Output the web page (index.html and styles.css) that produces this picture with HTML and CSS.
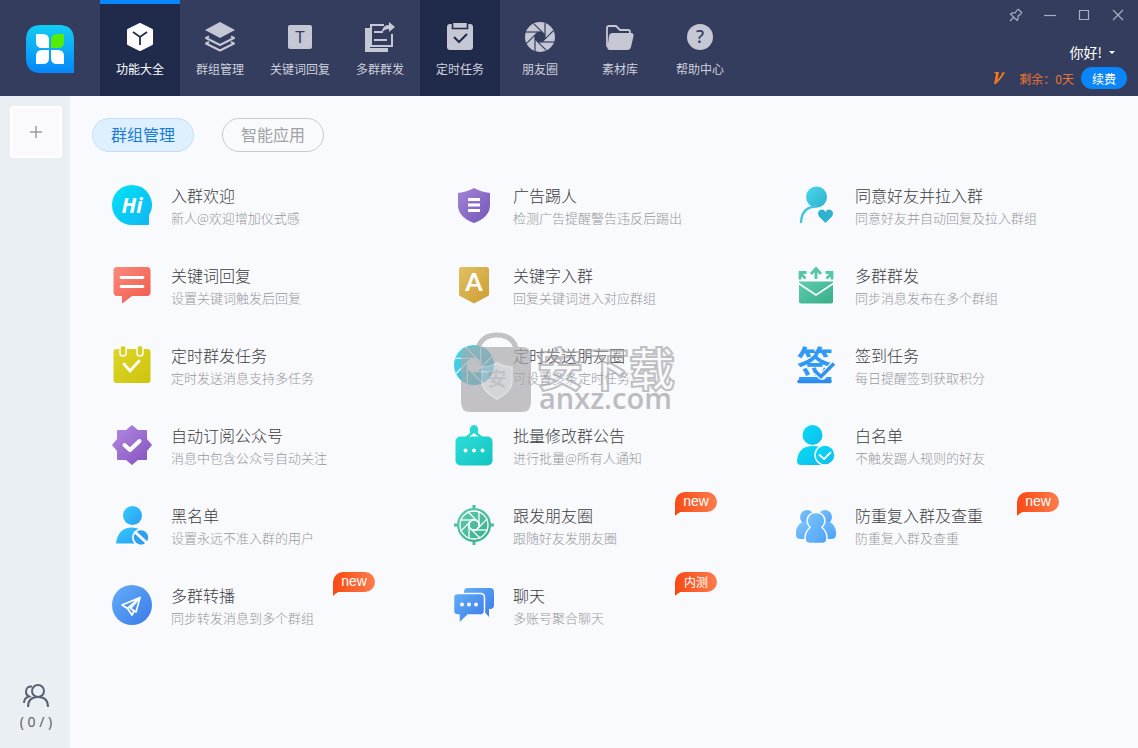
FILE: index.html
```html
<!DOCTYPE html>
<html lang="zh-CN">
<head>
<meta charset="utf-8">
<title>功能大全</title>
<link rel="stylesheet" href="styles.css">
</head>
<body>
<svg class="defs" width="0" height="0" aria-hidden="true">
  <defs>
    <linearGradient id="g-logo" x1="0" y1="0" x2="0" y2="1"><stop offset="0" stop-color="#12cdf2"/><stop offset="1" stop-color="#0686fb"/></linearGradient>
    <linearGradient id="g-hi" x1="0" y1="0" x2="1" y2="1"><stop offset="0" stop-color="#00e2f8"/><stop offset="1" stop-color="#10b6f2"/></linearGradient>
    <linearGradient id="g-red" x1="0" y1="0" x2="1" y2="1"><stop offset="0" stop-color="#fb8a7c"/><stop offset="1" stop-color="#ee5a4c"/></linearGradient>
    <linearGradient id="g-yellow" x1="0" y1="0" x2="1" y2="1"><stop offset="0" stop-color="#dcd62c"/><stop offset="1" stop-color="#cfc40c"/></linearGradient>
    <linearGradient id="g-purple" x1="0" y1="0" x2="1" y2="1"><stop offset="0" stop-color="#b48ae0"/><stop offset="1" stop-color="#8250c0"/></linearGradient>
    <linearGradient id="g-shield" x1="0" y1="0" x2="1" y2="1"><stop offset="0" stop-color="#a484d4"/><stop offset="1" stop-color="#7456b8"/></linearGradient>
    <linearGradient id="g-gold" x1="0" y1="0" x2="1" y2="1"><stop offset="0" stop-color="#e2c060"/><stop offset="1" stop-color="#cc9c34"/></linearGradient>
    <linearGradient id="g-sky" x1="0" y1="0" x2="1" y2="1"><stop offset="0" stop-color="#36ccfc"/><stop offset="1" stop-color="#2a9cf4"/></linearGradient>
    <linearGradient id="g-blue" x1="0" y1="0" x2="1" y2="1"><stop offset="0" stop-color="#62aef8"/><stop offset="1" stop-color="#3a7ae8"/></linearGradient>
    <linearGradient id="g-aqua" x1="0" y1="0" x2="1" y2="1"><stop offset="0" stop-color="#4cd8ec"/><stop offset="1" stop-color="#2ab0cc"/></linearGradient>
    <linearGradient id="g-green" x1="0" y1="0" x2="1" y2="1"><stop offset="0" stop-color="#5eccae"/><stop offset="1" stop-color="#38ae8a"/></linearGradient>
    <linearGradient id="g-teal" x1="0" y1="0" x2="1" y2="1"><stop offset="0" stop-color="#2cdcd8"/><stop offset="1" stop-color="#12c4c0"/></linearGradient>
    <linearGradient id="g-cyan" x1="0" y1="0" x2="1" y2="1"><stop offset="0" stop-color="#0adcf4"/><stop offset="1" stop-color="#0cbcec"/></linearGradient>
    <linearGradient id="g-group" x1="0" y1="0" x2="1" y2="1"><stop offset="0" stop-color="#7cc4fc"/><stop offset="1" stop-color="#4ea2f8"/></linearGradient>
    <path id="octagon" d="M-2-5H2L5-2V2L2 5H-2L-5 2V-2z"/>
    <path id="ray" d="M-14-5H2"/>
    <g id="rays">
      <use href="#ray"/><use href="#ray" transform="rotate(45)"/><use href="#ray" transform="rotate(90)"/><use href="#ray" transform="rotate(135)"/>
      <use href="#ray" transform="rotate(180)"/><use href="#ray" transform="rotate(225)"/><use href="#ray" transform="rotate(270)"/><use href="#ray" transform="rotate(315)"/>
    </g>
  </defs>
</svg>

<header class="topbar">
  <div class="brand">
    <svg width="48" height="48" viewBox="0 0 48 48" aria-hidden="true">
      <path fill="url(#g-logo)" d="M15 0H33Q48 0 48 15V48H15Q0 48 0 33V15Q0 0 15 0z"/>
      <path fill="#fff" d="M10 9h7q6 0 6 6v8h-7q-6 0-6-6zM10 39V31q0-6 6-6h7v8q0 6-6 6zM38 39h-7q-6 0-6-6v-8h7q6 0 6 6z"/>
      <path fill="#55ec08" d="M38 9v8q0 6-6 6h-7v-8q0-6 6-6z"/>
    </svg>
  </div>
  <nav class="nav">
    <button class="nav-item current">
      <svg width="30" height="30" viewBox="0 0 30 30"><path fill="currentColor" stroke="currentColor" stroke-width="2" stroke-linejoin="round" d="M15 2l12 6v14l-12 6-12-6V8z"/><path fill="none" stroke="#202b4c" stroke-width="1.8" d="M8 10l7 5 7-5M15 15V23"/></svg>
      <span>功能大全</span>
    </button>
    <button class="nav-item">
      <svg width="30" height="30" viewBox="0 0 30 30"><path fill="currentColor" d="M15 0l15 8-15 8-15-8z"/><path fill="none" stroke="currentColor" stroke-width="2" stroke-linejoin="round" d="M4 14.500l-3 1.500 14 7 14-7-3-1.500M4 20l-3 1.500 14 7 14-7-3-1.500"/></svg>
      <span>群组管理</span>
    </button>
    <button class="nav-item">
      <svg width="30" height="30" viewBox="0 0 30 30"><rect x="3" y="3" width="24" height="24" rx="2" fill="currentColor"/><text class="glyph-t" x="15" y="21" text-anchor="middle">T</text></svg>
      <span>关键词回复</span>
    </button>
    <button class="nav-item">
      <svg width="30" height="30" viewBox="0 0 30 30"><path fill="currentColor" d="M0 6h5v20h18v4H0z"/><path fill="none" stroke="currentColor" stroke-width="2" d="M19 3H6v21h21V12"/><path fill="none" stroke="currentColor" stroke-width="1.800" d="M9 10h9M9 18h13"/><path fill="currentColor" d="M24 0l6 5-6 5V7q-5 0-7 4 0-8 7-8z"/></svg>
      <span>多群群发</span>
    </button>
    <button class="nav-item hovered">
      <svg width="30" height="30" viewBox="0 0 30 30"><rect x="2" y="2" width="26" height="26" rx="3" fill="currentColor"/><path fill="currentColor" stroke="#202b4c" stroke-width="1.600" d="M7.500 1v5.500h15V1"/><path fill="none" stroke="#202b4c" stroke-width="2" d="M9 15l5 5 8-8"/></svg>
      <span>定时任务</span>
    </button>
    <button class="nav-item">
      <svg width="30" height="30" viewBox="-15 -15 30 30"><circle r="15" fill="currentColor"/><use href="#octagon" fill="#343d5e"/><use href="#rays" stroke="#343d5e" stroke-width="1.200"/></svg>
      <span>朋友圈</span>
    </button>
    <button class="nav-item">
      <svg width="30" height="30" viewBox="0 0 30 30"><path fill="none" stroke="currentColor" stroke-width="1.800" stroke-linejoin="round" d="M4 25Q2 25 2 23V6q0-2 2-2h7l4 4h8q2 0 2 2v2"/><path fill="currentColor" d="M8 11h18q3 0 2.500 3L26 25q-.5 3-4 3H5q-3 0-2.500-3L4 14q.5-3 4-3z"/></svg>
      <span>素材库</span>
    </button>
    <button class="nav-item">
      <svg width="30" height="30" viewBox="0 0 30 30"><circle cx="15" cy="15" r="13" fill="currentColor"/><text class="glyph-q" x="15" y="21" text-anchor="middle">?</text></svg>
      <span>帮助中心</span>
    </button>
  </nav>
  <div class="tools">
    <div class="window-controls">
      <button aria-label="置顶"><svg width="14" height="14" viewBox="0 0 14 14"><path d="M9 1l4 4M8.500 1.500L6 5Q3 4.500 1.500 6L8 12.500Q9.500 11 9 8l3.500-2.500M4.500 9.500L1 13"/></svg></button>
      <button aria-label="最小化"><svg width="14" height="14" viewBox="0 0 14 14"><path d="M1 7.500h12"/></svg></button>
      <button aria-label="最大化"><svg width="14" height="14" viewBox="0 0 14 14"><path d="M2.500 2.500h9v9h-9z"/></svg></button>
      <button aria-label="关闭"><svg width="14" height="14" viewBox="0 0 14 14"><path d="M2 2l10 10M12 2L2 12"/></svg></button>
    </div>
    <button class="user">你好!<span class="caret"></span></button>
    <div class="plan">
      <svg width="12" height="12" viewBox="0 0 12 12" aria-hidden="true"><path fill="#ec7a1c" d="M1 0h5L4.500 8 9 2 8 1l4-1Q11 4 3 12H1L3 2z"/></svg>
      <span>剩余：0天</span>
      <button class="renew">续费</button>
    </div>
  </div>
</header>

<div class="body">
  <aside class="side">
    <button class="add" aria-label="添加"><svg width="12" height="12" viewBox="0 0 12 12"><path d="M6 0v12M0 6h12"/></svg></button>
    <div class="members">
      <svg width="26" height="24" viewBox="0 0 26 24" aria-hidden="true"><circle cx="15" cy="7" r="6"/><path d="M5 23Q5 13 15 13t10 10M9 2.500Q3 2 3 8q0 3 3 4.500Q1 14 1 19"/></svg>
      <span>( 0 / )</span>
    </div>
  </aside>

  <main class="main">
    <div class="tabs">
      <button class="tab selected">群组管理</button>
      <button class="tab">智能应用</button>
    </div>

    <div class="grid">
      <a class="card" href="#">
        <svg width="40" height="40" viewBox="0 0 40 40"><path fill="url(#g-hi)" d="M20 0a20 20 0 0 1 17 30.500V39q0 1-1 1H20A20 20 0 0 1 20 0z"/><text class="glyph-hi" x="20" y="28" text-anchor="middle">Hi</text></svg>
        <div class="info"><h2>入群欢迎</h2><p>新人@欢迎增加仪式感</p></div>
      </a>
      <a class="card" href="#">
        <svg width="40" height="40" viewBox="0 0 40 40"><path fill="url(#g-shield)" d="M20 3Q27 7 36 8V20Q36 32 20 38 4 32 4 20V8Q13 7 20 3z"/><path stroke="#fff" stroke-width="3" d="M14 14.500h12M14 20h12M14 25.500h12"/></svg>
        <div class="info"><h2>广告踢人</h2><p>检测广告提醒警告违反后踢出</p></div>
      </a>
      <a class="card" href="#">
        <svg width="40" height="40" viewBox="0 0 40 40"><circle cx="20.500" cy="12" r="10.500" fill="url(#g-aqua)"/><path fill="none" stroke="#44c4dc" stroke-width="2.400" stroke-linecap="round" d="M5 37Q6 22 20 21.500"/><path fill="#30b2cf" d="M29.500 38l-6.500-6.500q-2.500-4 1-6.500 3.500-1.500 5.500 2 2-3.500 5.500-2 3.500 2.500 1 6.500z"/></svg>
        <div class="info"><h2>同意好友并拉入群</h2><p>同意好友并自动回复及拉入群组</p></div>
      </a>
      <a class="card" href="#">
        <svg width="40" height="40" viewBox="0 0 40 40"><path fill="url(#g-red)" d="M5 2H35q3.500 0 3.500 3.500V27q0 4-3.500 4H20L11 38q-1 .5-1-1V31H5q-3.500 0-3.500-4V5.500Q1.500 2 5 2z"/><path stroke="#fff" stroke-width="2.800" stroke-linecap="round" d="M9 12.500h22M9 21.500h22"/></svg>
        <div class="info"><h2>关键词回复</h2><p>设置关键词触发后回复</p></div>
      </a>
      <a class="card" href="#">
        <svg width="40" height="40" viewBox="0 0 40 40"><path fill="url(#g-gold)" d="M7 2H33q2 0 2 2V29.500q0 1-1 1.500L20 38.500 6 31q-1-.5-1-1.500V4q0-2 2-2z"/><text class="glyph-a" x="20" y="26" text-anchor="middle">A</text></svg>
        <div class="info"><h2>关键字入群</h2><p>回复关键词进入对应群组</p></div>
      </a>
      <a class="card" href="#">
        <svg width="40" height="40" viewBox="0 0 40 40"><path fill="url(#g-green)" d="M3 16.500H37V36.500q0 2-2 2H5q-2 0-2-2z"/><path fill="none" stroke="#f9fafe" stroke-width="1.800" d="M2 18l18 12 18-12"/><path fill="none" stroke="#58c6a6" stroke-width="2.800" d="M20 14V4M15 9l5-5.500L25 9M9.500 13.500L4 8M4 14.500V7.500h6.500M30.500 13.500L36 8M36 14.500V7.500h-6.500"/></svg>
        <div class="info"><h2>多群群发</h2><p>同步消息发布在多个群组</p></div>
      </a>
      <a class="card" href="#">
        <svg width="40" height="40" viewBox="0 0 40 40"><rect x="1.500" y="4" width="37" height="34" rx="3" fill="url(#g-yellow)"/><path fill="#d7d020" stroke="#f9fafe" stroke-width="1.500" d="M8 2V8.500q0 2.500 3 2.500t3-2.500V2M25 2V8.500q0 2.500 3 2.500t3-2.500V2"/><path fill="#d7d020" d="M9 3q0-2 2-2t2 2v6H9zM26 3q0-2 2-2t2 2v6h-4z"/><path fill="none" stroke="#fff" stroke-width="2.800" stroke-linecap="round" d="M12 19l6 7L27 16"/></svg>
        <div class="info"><h2>定时群发任务</h2><p>定时发送消息支持多任务</p></div>
      </a>
      <a class="card" href="#">
        <svg width="40" height="40" viewBox="-15 -15 30 30"><circle r="15" fill="url(#g-aqua)"/><use href="#octagon" fill="#e8f4f8"/><use href="#rays" stroke="#e8f4f8" stroke-width="0.900"/></svg>
        <div class="info"><h2>定时发送朋友圈</h2><p>可设置多条定时任务</p></div>
      </a>
      <a class="card" href="#">
        <svg width="40" height="40" viewBox="0 0 40 40"><text class="glyph-sign" x="19" y="34" text-anchor="middle">签</text><path fill="none" stroke="#f9fafe" stroke-width="7" d="M20 26l6 6L40 17"/><path fill="none" stroke="#2f92ee" stroke-width="3.500" d="M19 26l6 5.500L38 18.500"/><path stroke="#2f8af0" stroke-width="3.500" stroke-linecap="round" d="M3 36.500h31"/></svg>
        <div class="info"><h2>签到任务</h2><p>每日提醒签到获取积分</p></div>
      </a>
      <a class="card" href="#">
        <svg width="40" height="40" viewBox="0 0 40 40"><path fill="url(#g-purple)" stroke="url(#g-purple)" stroke-linejoin="round" d="M20 .5L26 5.500H34.500V14L39.500 20l-5 6v8.500H26L20 39.500l-6-5H5.500V26L.5 20l5-6V5.500H14z"/><path fill="none" stroke="#fff" stroke-width="4" stroke-linecap="round" stroke-linejoin="round" d="M12.500 20l5.500 5 9.500-9"/></svg>
        <div class="info"><h2>自动订阅公众号</h2><p>消息中包含公众号自动关注</p></div>
      </a>
      <a class="card" href="#">
        <svg width="40" height="40" viewBox="0 0 40 40"><path fill="#29d6d3" fill-rule="evenodd" d="M10 13l6-5Q15 0 20 0t4 8l6 5zM15 12h10l-5-4z"/><rect x="1.500" y="11.500" width="37" height="29" rx="5" fill="url(#g-teal)"/><circle cx="11.500" cy="25.500" r="1.900" fill="#fff"/><circle cx="20" cy="25.500" r="1.900" fill="#fff"/><circle cx="28.500" cy="25.500" r="1.900" fill="#fff"/></svg>
        <div class="info"><h2>批量修改群公告</h2><p>进行批量@所有人通知</p></div>
      </a>
      <a class="card" href="#">
        <svg width="40" height="40" viewBox="0 0 40 40"><circle cx="16.500" cy="10" r="10" fill="url(#g-cyan)"/><path fill="url(#g-cyan)" d="M1 36Q2 21 17 21t15 15q0 4-4 4H5q-4 0-4-4z"/><circle cx="29" cy="30" r="10" fill="url(#g-cyan)" stroke="#f9fafe" stroke-width="1.500"/><path fill="none" stroke="#fff" stroke-width="1.800" d="M23 29.500l5 4.500 7-7"/></svg>
        <div class="info"><h2>白名单</h2><p>不触发踢人规则的好友</p></div>
      </a>
      <a class="card" href="#">
        <svg width="40" height="40" viewBox="0 0 40 40"><circle cx="20.500" cy="10.500" r="9.500" fill="url(#g-sky)"/><path fill="url(#g-sky)" d="M4 38.500Q6 22.500 20 22.500q8 0 12 6v10z"/><circle cx="29" cy="32.500" r="9" fill="#f9fafe"/><circle cx="29" cy="32.500" r="7.200" fill="#2e9ff2"/><path stroke="#f9fafe" stroke-width="3" d="M23 27l12 11"/></svg>
        <div class="info"><h2>黑名单</h2><p>设置永远不准入群的用户</p></div>
      </a>
      <a class="card" href="#">
        <svg width="40" height="40" viewBox="-20 -20 40 40"><path stroke="#4abd9b" stroke-width="3" d="M0-20V20M-20 0H20"/><circle r="17" fill="url(#g-green)"/><circle r="14" fill="none" stroke="#fff" stroke-width="1.300"/><use href="#octagon" fill="none" stroke="#fff" stroke-width="1.300"/><use href="#rays" stroke="#fff" stroke-width="1.300"/></svg>
        <div class="info"><h2>跟发朋友圈</h2><p>跟随好友发朋友圈</p></div>
        <span class="badge">new</span>
      </a>
      <a class="card" href="#">
        <svg width="40" height="40" viewBox="0 0 40 40"><g fill="url(#g-group)"><circle cx="11" cy="12" r="7"/><circle cx="29" cy="12" r="7"/><path d="M6 17Q-1 22 0 30q0 4 5 4h30q5 0 5-4 1-8-6-13z"/></g><path fill="url(#g-group)" stroke="#f9fafe" stroke-width="1.500" d="M14 22.500Q11 19 11 15.500 12 7.500 20 7.500t9 8Q29 19 26 22.500q5 4 5 11 0 5-5 5H14q-5 0-5-5 0-7 5-11z"/></svg>
        <div class="info"><h2>防重复入群及查重</h2><p>防重复入群及查重</p></div>
        <span class="badge">new</span>
      </a>
      <a class="card" href="#">
        <svg width="40" height="40" viewBox="0 0 40 40"><circle cx="20" cy="20" r="20" fill="url(#g-blue)"/><path fill="none" stroke="#fff" stroke-width="1.700" stroke-linejoin="round" d="M28 12.500L10 20l5.500 3.500L28 12.500 24 27l-5.500-3.500L28 12.500M15.500 23.500L20 30l2-4"/></svg>
        <div class="info"><h2>多群转播</h2><p>同步转发消息到多个群组</p></div>
        <span class="badge">new</span>
      </a>
      <a class="card" href="#">
        <svg width="40" height="40" viewBox="0 0 40 40"><path fill="url(#g-blue)" d="M14 3H36q4 0 4 4V20q0 4-4 4h-1v8l-7-8H10V7q0-4 4-4z"/><path fill="url(#g-blue)" stroke="#f9fafe" stroke-width="1.500" d="M4 8.500H26.500q4 0 4 4V26q0 4-4 4H14L5 38.500V30H4q-4.500 0-4.500-4V12.500q0-4 4.500-4z"/><circle cx="8" cy="19.500" r="2" fill="#fff"/><circle cx="15" cy="19.500" r="2" fill="#fff"/><circle cx="22" cy="19.500" r="2" fill="#fff"/></svg>
        <div class="info"><h2>聊天</h2><p>多账号聚合聊天</p></div>
        <span class="badge beta">内测</span>
      </a>
    </div>

    <svg class="watermark" width="220" height="92" viewBox="0 0 220 92" aria-hidden="true">
      <path fill="none" stroke="#a9a9ac" stroke-width="5" d="M18 16Q22 3 37 3t19 13"/>
      <path fill="#a9a9ac" d="M10 15H62q9 0 9 9V70q0 10-9 10H10q-9 0-9-10V24q0-9 9-9z"/>
      <path fill="#c3c4c8" stroke="#d3d4d8" stroke-width="1.500" d="M37 31q7 4 15 4v14q0 10-15 18Q22 59 22 49V35q8 0 15-4z"/>
      <text class="wm-mark" x="37" y="54" text-anchor="middle">安</text>
      <text class="wm-name" x="77" y="54">安下载</text>
      <text class="wm-site" x="79" y="77">anxz.com</text>
    </svg>
  </main>
</div>
</body>
</html>
```

FILE: styles.css
```css
* { box-sizing: border-box; }

body {
  margin: 0;
  min-height: 100vh;
  display: flex;
  flex-direction: column;
  background: #f9fafe;
  color: #444;
  font-family: "Noto Sans CJK SC", sans-serif;
  font-size: 12px;
}

button {
  padding: 0;
  border: 0;
  background: none;
  color: inherit;
  font: inherit;
  cursor: pointer;
}

.defs { position: absolute; }

/* Top bar */
.topbar {
  display: flex;
  height: 96px;
  background: #343d5e;
  color: #ced0dc;
}

.brand {
  width: 100px;
  padding-top: 2px;
  display: flex;
  align-items: center;
  justify-content: center;
}

.nav { display: flex; }

.nav-item {
  width: 80px;
  padding-top: 18px;
  border-top: 4px solid transparent;
  display: flex;
  flex-direction: column;
  align-items: center;
  gap: 8px;
  line-height: 18px;
}

.nav-item svg { color: #c6c7d5; }
.nav-item.current { background: #202b4c; border-top-color: #0a86fc; color: #fff; }
.nav-item.current svg { color: #fff; }
.nav-item.hovered { background: #202b4c; border-top-color: #202b4c; }

.glyph-t { font: 17px "Noto Sans", sans-serif; fill: #343d5e; }
.glyph-q { font: 500 18px "Noto Sans", sans-serif; fill: #343d5e; }

.tools {
  margin-left: auto;
  padding: 8px 11px 0 0;
  display: flex;
  flex-direction: column;
  align-items: flex-end;
}

.window-controls { display: flex; gap: 20px; padding-right: 2px; }
.window-controls button { display: flex; }
.window-controls path { fill: none; stroke: #a9aec2; stroke-width: 1.200; }

.user {
  display: flex;
  align-items: center;
  gap: 7px;
  margin: 19px 12px 4px 0;
  color: #fff;
  font-size: 14px;
  line-height: 22px;
}

.caret { border: 3px solid transparent; border-top-color: #fff; border-bottom: 0; }

.plan { display: flex; align-items: center; color: #ec7430; }
.plan span { margin: 0 7px 0 14px; font-family: "Noto Sans CJK TC", sans-serif; }

.renew {
  width: 46px;
  height: 22px;
  border-radius: 11px;
  background: #0a86fa;
  color: #fff;
}

/* Page body */
.body { flex: 1; display: flex; }

.side {
  width: 70px;
  padding: 10px 8px 16px 10px;
  display: flex;
  flex-direction: column;
  justify-content: space-between;
  background: #e9eff3;
}

.add {
  height: 52px;
  border: 2px solid #fff;
  border-radius: 4px;
  background: #faf9fc;
}

.add path { stroke: #9c9ca0; stroke-width: 1.500; }

.members {
  display: flex;
  flex-direction: column;
  align-items: center;
  gap: 4px;
  color: #62636c;
  font-family: "Noto Sans", sans-serif;
  font-size: 14px;
  line-height: 20px;
}

.members svg { fill: none; stroke: #5a6072; stroke-width: 2; }

.main { position: relative; flex: 1; padding: 22px 20px 0 22px; }

.tabs { display: flex; gap: 28px; }

.tab {
  width: 102px;
  height: 34px;
  padding-bottom: 2px;
  border: 1px solid #c9cacf;
  border-radius: 17px;
  color: #a0a1a5;
  font-size: 16px;
  line-height: 30px;
}

.tab.selected { border-color: #c4dff6; background: #deeffe; color: #1a7cd8; }

.grid {
  margin-top: 13px;
  display: grid;
  grid-template-columns: repeat(3, 1fr);
}

.card {
  position: relative;
  height: 80px;
  padding-left: 20px;
  display: flex;
  align-items: center;
  gap: 19px;
  color: #3c3c3e;
  text-decoration: none;
}

.card svg { overflow: visible; }
.info { padding-top: 2px; }
.card h2 { margin: 0; font-size: 16px; font-weight: 300; line-height: 24px; }
.card p { margin: 0; font-size: 13px; font-weight: 300; line-height: 22px; color: #96979b; }

.glyph-hi { font: italic bold 21px "Open Sans", sans-serif; fill: #fff; }
.glyph-a { font: bold 25px Lato, sans-serif; fill: #fff; }
.glyph-sign { font: bold 37px "Noto Sans CJK SC", sans-serif; fill: #2f9af4; }

.badge {
  position: absolute;
  top: 7px;
  left: 241px;
  width: 42px;
  height: 20px;
  border-radius: 10px 10px 10px 0;
  background: linear-gradient(90deg, #f84a14, #fc7c4c);
  color: #fff;
  font-family: "Liberation Sans", sans-serif;
  font-size: 14px;
  line-height: 19px;
  text-align: center;
}

.badge.beta { font-family: "Noto Sans CJK SC", sans-serif; font-size: 12px; }

.badge::after {
  content: "";
  position: absolute;
  left: 0;
  top: 19px;
  width: 7px;
  height: 5px;
  background: #f84a14;
  clip-path: polygon(0 0, 100% 0, 30% 60%, 0 100%);
}

/* Overlay mark */
.watermark {
  position: absolute;
  top: 236px;
  left: 390px;
  opacity: 0.68;
  pointer-events: none;
}

.wm-mark { font: bold 19px "Noto Sans CJK SC", sans-serif; fill: #a9a9ac; }

.wm-name {
  font: bold 46px "Noto Sans CJK SC", sans-serif;
  fill: #f9fafe;
  fill-opacity: 0.4;
  stroke: #a4a4a8;
  stroke-width: 2;
}

.wm-site { font: 600 29px "Open Sans", sans-serif; fill: #a0a0a4; }
```
